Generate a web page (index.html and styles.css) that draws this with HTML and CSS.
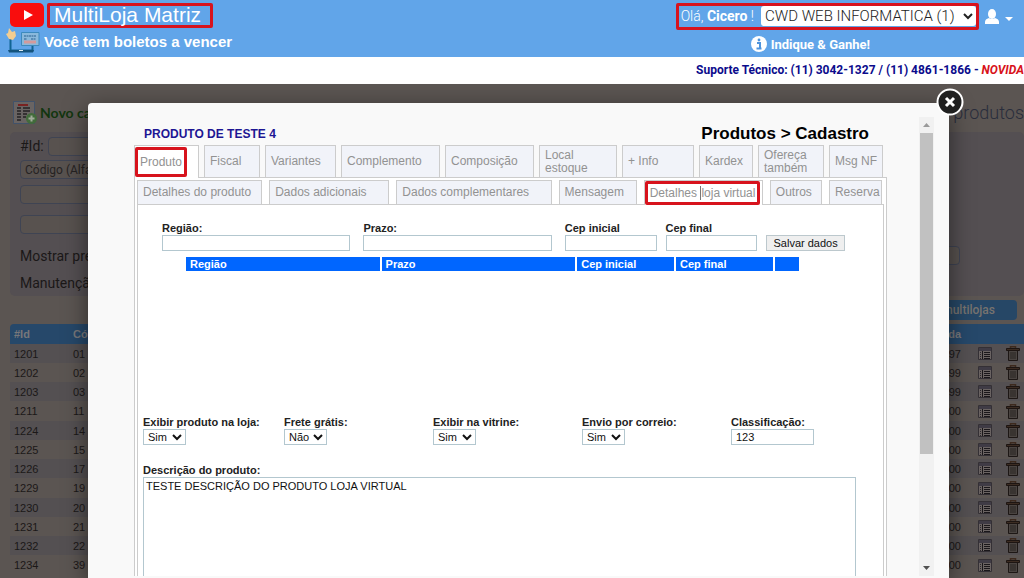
FILE: index.html
```
<!DOCTYPE html>
<html lang="pt-BR">
<head>
<meta charset="utf-8">
<title>MultiLoja Matriz</title>
<link rel="stylesheet" href="styles.css">
</head>
<body>
<svg class="defs" aria-hidden="true">
  <symbol id="list" viewBox="0 0 14 15"><path fill="#6a6362" stroke="#343035" d="M.5 1.500h13v12H.5z"/><path fill="#3f3b45" d="M1 2h12v3H1z"/><path fill="none" stroke="#1a171a" d="M4.500 5v8M6 6.500h6M6 8.500h6M6 10.500h6M6 12.500h6"/><path fill="none" stroke="#2c282c" stroke-dasharray="1 1" d="M2.500 6v7"/></symbol>
  <symbol id="trash" viewBox="0 0 14 15"><path fill="#4a4441" stroke="#1d1715" d="M2.500 4h9v10.500h-9z"/><path fill="#3c2c22" stroke="#1d1512" d="M.5 2.500h13v2H.5z"/><path stroke="#3d2a1e" stroke-width="1.500" fill="none" d="M4.500 2V.8h5V2"/><path stroke="#292422" d="M5 6v7M7 6v7M9 6v7"/></symbol>
</svg>
<header class="topbar">
  <div class="brand">
    <div class="brand-row">
      <svg class="youtube" viewBox="0 0 34 24"><rect width="34" height="24" rx="5" fill="#f90d0d"/><path d="M14 7l9 5-9 5z" fill="#fff"/></svg>
      <h1 class="brand-name marked">MultiLoja Matriz</h1>
    </div>
    <a class="alert" href="#">
      <svg class="bill" viewBox="0 0 34 26"><path d="M4.500 9v13.500h22V18" fill="none" stroke="#116493" stroke-width="2"/><path d="M2 22h26l-1 2.500H3z" fill="#13537d"/><path d="M13 22h4v1h-4z" fill="#dcebf2"/><path d="M15.500 4.500H33v13H15.500z" fill="#8ab9dc" stroke="#3d8abd"/><path d="M18 8h12M18 11h3M25 11h5" stroke="#4a7da8" stroke-width="1.500" stroke-dasharray="2 .5"/><path d="M18 14h12" stroke="#d39a9c" stroke-width="3"/><path d="M3 0l3 4 3-1 1 5-3 4-4-1-3-5 2-1z" fill="#f3cd91"/></svg>
      Você tem boletos a vencer
    </a>
  </div>
  <div class="account">
    <div class="account-row">
      <div class="user marked">
        <label for="store">Olá, <b>Cicero</b> !</label>
        <select id="store" class="store"><option>CWD WEB INFORMATICA (1)</option></select>
      </div>
      <button class="profile" aria-label="Perfil"><svg viewBox="0 0 28 16"><ellipse cx="7" cy="5" rx="4" ry="5" fill="#fff"/><path d="M0 15v-2q0-3 4-4 3 2 6 0 4 1 4 4v2z" fill="#fff"/><path d="M20 8h8l-4 4z" fill="#fff"/></svg></button>
    </div>
    <a class="refer" href="#"><svg viewBox="0 0 16 16"><circle cx="8" cy="8" r="8" fill="#fff"/><path d="M6 7h3v5M5.500 12.500h5" fill="none" stroke="#4e94dd" stroke-width="2"/><circle cx="8" cy="4" r="1.400" fill="#4e94dd"/></svg>Indique &amp; Ganhe!</a>
  </div>
</header>
<p class="support">Suporte Técnico: (11) 3042-1327 / (11) 4861-1866 - <em>NOVIDA</em></p>

<main class="page">
  <div class="page-head">
    <a class="new" href="#"><svg viewBox="0 0 25 24"><path d="M.5.5h21v22H.5z" fill="#696463" stroke="#41526a"/><path d="M5 4h10" stroke="#782222" stroke-width="2"/><path d="M4 7h4M4 10h4M4 13h4M4 16h4M4 19h4M10 7h7M10 10h7M10 13h4M10 16h3" stroke="#252225" stroke-width="1.500"/><circle cx="18.500" cy="17.500" r="5.500" fill="#426b3b"/><path d="M18.500 14.500v6M15.500 17.500h6" stroke="#a1ab9b" stroke-width="2"/></svg>Novo ca</a>
    <h2 class="page-title">e produtos</h2>
  </div>
  <section class="filters">
    <div class="filter-id"><label for="fid">#Id:</label><input id="fid"></div>
    <select class="wide" aria-label="Campo"><option>Código (Alfa</option></select>
    <input class="wide" aria-label="Busca">
    <input class="wide second" aria-label="Filtro">
    <div class="filter-line"><label for="price">Mostrar pre</label><input id="price"></div>
    <div class="filter-line">Manutençã</div>
  </section>
  <div class="actions"><button class="stores">multilojas</button></div>
  <table class="products">
    <thead><tr><th class="c-id">#Id</th><th>Có</th><th class="c-val">da</th><th class="c-list"></th><th class="c-del"></th></tr></thead>
    <tbody id="rows"></tbody>
  </table>
</main>

<div class="modal" role="dialog" aria-label="Produtos - Cadastro">
  <button class="close" aria-label="Fechar"><svg viewBox="0 0 28 28"><circle cx="14" cy="14" r="12.500" fill="#202020" stroke="#fff" stroke-width="2"/><path d="M10 10l8 8M18 10l-8 8" stroke="#fff" stroke-width="3"/></svg></button>
  <div class="frame">
    <div class="content">
      <div class="heading"><h3>PRODUTO DE TESTE 4</h3><h2>Produtos &gt; Cadastro</h2></div>
      <nav class="tabs">
        <button class="tab t65 active"><span class="marked tight">Produto</span></button>
        <button class="tab t56">Fiscal</button>
        <button class="tab t71">Variantes</button>
        <button class="tab t99">Complemento</button>
        <button class="tab t89">Composição</button>
        <button class="tab t78">Local<br>estoque</button>
        <button class="tab t72">+ Info</button>
        <button class="tab t54">Kardex</button>
        <button class="tab t66">Ofereça<br>também</button>
        <button class="tab t54">Msg NF</button>
      </nav>
      <div class="outer">
        <nav class="tabs sub">
          <button class="tab t125">Detalhes do produto</button>
          <button class="tab t120">Dados adicionais</button>
          <button class="tab t155">Dados complementares</button>
          <button class="tab t78">Mensagem</button>
          <button class="tab t119 active"><span class="marked tight">Detalhes <i class="caret"></i>loja virtual</span></button>
          <button class="tab t52">Outros</button>
          <button class="tab t53">Reserva</button>
        </nav>
        <div class="inner">
          <form class="region">
            <div class="field f-wide"><label for="reg">Região:</label><input id="reg"></div>
            <div class="field f-wide"><label for="pra">Prazo:</label><input id="pra"></div>
            <div class="field f-cep"><label for="ci">Cep inicial</label><input id="ci"></div>
            <div class="field f-cep"><label for="cf">Cep final</label><input id="cf"></div>
            <button type="button" class="save">Salvar dados</button>
          </form>
          <table class="regions"><thead><tr><th class="r-wide">Região</th><th class="r-wide">Prazo</th><th class="r-cep">Cep inicial</th><th class="r-cep">Cep final</th><th class="r-act"></th></tr></thead></table>
          <div class="options">
            <div class="field"><label for="o1">Exibir produto na loja:</label><select id="o1"><option>Sim</option></select></div>
            <div class="field"><label for="o2">Frete grátis:</label><select id="o2"><option>Não</option></select></div>
            <div class="field"><label for="o3">Exibir na vitrine:</label><select id="o3"><option>Sim</option></select></div>
            <div class="field"><label for="o4">Envio por correio:</label><select id="o4"><option>Sim</option></select></div>
            <div class="field"><label for="o5">Classificação:</label><input id="o5" value="123"></div>
          </div>
          <div class="field description"><label for="desc">Descrição do produto:</label><textarea id="desc">TESTE DESCRIÇÃO DO PRODUTO LOJA VIRTUAL</textarea></div>
        </div>
      </div>
    </div>
    <div class="scrollbar"><svg viewBox="0 0 15 16"><path d="M4 10h7L7.500 6z" fill="#9a9a9a"/></svg><div class="thumb"></div><svg class="down" viewBox="0 0 15 16"><path d="M4 6h7l-3.500 4z" fill="#505050"/></svg></div>
  </div>
</div>
<script src="rows.js"></script>
</body>
</html>
```
FILE: rows.js
```
const products = [
  [1201, '01', '97'], [1202, '02', '99'], [1203, '03', '99'], [1211, '11', '00'],
  [1224, '14', '00'], [1225, '15', '00'], [1226, '17', '00'], [1229, '19', '00'],
  [1230, '20', '00'], [1231, '21', '00'], [1232, '22', '00'], [1234, '39', '00']
];
document.getElementById('rows').innerHTML = products.map(([id, code, cents]) =>
  `<tr><td class="c-id">${id}</td><td>${code}</td><td class="c-val">${cents}</td>` +
  '<td class="c-list"><svg><use href="#list"/></svg></td>' +
  '<td class="c-del"><svg><use href="#trash"/></svg></td></tr>'
).join('');
```
FILE: styles.css
```
* { box-sizing: border-box; }
body {
  margin: 0;
  height: 100vh;
  overflow: hidden;
  display: flex;
  flex-direction: column;
  background: #5b5552;
  font-family: "Liberation Sans", Arial, sans-serif;
  font-size: 11px;
}
h1, h2, h3, p { margin: 0; }
button, input, select, textarea { font: inherit; margin: 0; border-radius: 0; }
button { padding: 0; border: 0; }
a { text-decoration: none; }
svg { display: block; flex: none; }
.defs { position: absolute; width: 0; height: 0; }
.marked { border: 3px solid #d7131d; border-radius: 2px; }

/* Top bar */
.topbar {
  flex: none;
  display: flex;
  justify-content: space-between;
  height: 57px;
  padding: 3px 11px 0 6px;
  background: #61a5e9;
  color: #fff;
}
.brand-row { display: flex; gap: 3px; padding-left: 4px; }
.youtube { width: 34px; height: 24px; }
.brand-name {
  height: 25px;
  padding: 0 9px 0 4px;
  font-size: 21px;
  font-weight: 400;
  line-height: 18px;
}
.alert {
  display: flex;
  align-items: center;
  gap: 4px;
  height: 26px;
  color: #fff;
  font-size: 15px;
  font-weight: 700;
}
.bill { width: 34px; height: 26px; }
.account { font-family: Roboto, sans-serif; }
.account-row { display: flex; gap: 6px; align-items: center; }
.user {
  display: flex;
  gap: 7px;
  height: 27px;
  align-items: flex-start;
  font-size: 14px;
  font-weight: 300;
  line-height: 20px;
  padding-left: 2px;
}
.user b { font-weight: 700; }
.store {
  width: 215px;
  height: 20px;
  padding: 0;
  border: 0;
  border-radius: 3px;
  background: #fff;
  color: #222;
  font-size: 15px;
}
.profile { background: none; }
.profile svg { width: 28px; height: 16px; }
.refer {
  display: flex;
  gap: 4px;
  align-items: center;
  padding: 6px 0 0 75px;
  color: #fff;
  font-size: 13px;
  font-weight: 700;
}
.refer svg { width: 16px; height: 16px; }
.support {
  flex: none;
  height: 27px;
  background: #fff;
  color: #0b0b8c;
  font: 700 12px/26px Roboto, sans-serif;
  text-align: right;
}
.support em { color: #d8121a; }

/* Dimmed page */
.page { padding-left: 10px; color: #1b1818; }
.page-head {
  display: flex;
  justify-content: space-between;
  align-items: center;
  height: 48px;
  padding: 9px 0 0 3px;
}
.new {
  display: flex;
  align-items: center;
  gap: 2px;
  color: #12360f;
  font: 700 14px Lato, sans-serif;
}
.new svg { width: 25px; height: 24px; }
.page-title { color: #292d3c; font: 300 18px Roboto, sans-serif; }
.filters {
  height: 164px;
  padding: 4px 0 0 10px;
  border-radius: 5px;
  background: #544f52;
  font-family: Roboto, sans-serif;
  font-size: 14px;
}
.filters input, .filters select {
  height: 19px;
  padding: 0 5px;
  border: 1px solid #3f4453;
  border-radius: 4px;
  background: #58524f;
  color: #262323;
}
.filters select { padding: 0; font-size: 12px; }
.filter-id { display: flex; gap: 4px; align-items: center; height: 20px; margin-bottom: 4px; }
.wide { display: block; width: 75%; margin-bottom: 6px; }
.second { margin: 11px 0 8px; }
.filter-line {
  display: flex;
  justify-content: space-between;
  align-items: center;
  height: 27px;
  padding-right: 64px;
}
.actions { display: flex; justify-content: flex-end; padding: 4px 7px 4px 0; }
.stores {
  width: 160px;
  height: 20px;
  padding-right: 22px;
  border-radius: 4px;
  background: #264766;
  color: #77736f;
  font: 500 12px/20px Roboto, sans-serif;
  text-align: right;
}
.products { width: 100%; border-collapse: collapse; table-layout: fixed; }
.products tr { height: 19px; }
.products tbody tr:nth-child(4n) { height: 20px; }
.products th { height: 20px; background: #26486a; color: #77777a; text-align: left; }
.products th:first-child { border-radius: 4px 0 0 0; }
.products td, .products th { padding: 0 4px; }
.products tbody tr:nth-child(odd) { background: #545052; }
.products .c-id { width: 59px; }
.products .c-val { width: 80px; padding: 0; text-align: right; }
.products .c-list { width: 38px; padding: 0 0 0 17px; }
.products .c-del { width: 25px; padding: 0 0 0 7px; }
.products svg { width: 14px; height: 15px; }

/* Dialog */
.modal {
  position: absolute;
  top: 103px;
  right: 75px;
  bottom: 0;
  left: 88px;
  padding: 14px 15px 2px 46px;
  border-radius: 4px 4px 0 0;
  background: #f9f9f9;
  box-shadow: 0 6px 25px rgba(0, 0, 0, .5);
}
.close { position: absolute; top: -15px; right: -15px; background: none; }
.close svg { width: 28px; height: 28px; }
.frame { display: flex; gap: 32px; height: 100%; overflow: hidden; }
.content { flex: 1; display: flex; flex-direction: column; }
.heading {
  flex: none;
  display: flex;
  justify-content: space-between;
  align-items: center;
  height: 28px;
  padding: 6px 18px 0 10px;
}
.heading h3 { color: #1d1693; font-size: 12px; }
.heading h2 { color: #000; font-size: 17px; }
.tabs { flex: none; display: flex; gap: 5px; height: 32px; padding-right: 4px; }
.tab {
  padding: 0 0 0 5px;
  border: 1px solid #ccc;
  border-bottom: 0;
  background: #f1f3f9;
  color: #929292;
  font-size: 12px;
  line-height: 13px;
  text-align: left;
  white-space: nowrap;
  min-width: 0;
}
.tab.active { position: relative; height: calc(100% + 1px); padding-left: 0; background: #fff; }
.sub { gap: 7px; height: 24px; padding-right: 2px; }
.t52 { flex: 52 1 52px; }
.t53 { flex: 53 1 53px; }
.t54 { flex: 54 1 54px; }
.t56 { flex: 56 1 56px; }
.t65 { flex: 65 1 65px; }
.t66 { flex: 66 1 66px; }
.t71 { flex: 71 1 71px; }
.t72 { flex: 72 1 72px; }
.t78 { flex: 78 1 78px; }
.t89 { flex: 89 1 89px; }
.t99 { flex: 99 1 99px; }
.t119 { flex: 119 1 119px; }
.t120 { flex: 120 1 120px; }
.t125 { flex: 125 1 125px; }
.t155 { flex: 155 1 155px; }
.tight { display: inline-block; padding: 3px 2px; line-height: 18px; }
.sub .tight { padding: 0 2px; }
.caret { border-left: 1px solid #777; }
.outer {
  flex: 1;
  display: flex;
  flex-direction: column;
  padding: 2px 2px 0;
  border: 1px solid #ccc;
  border-bottom: 0;
  background: #fff;
}
.inner {
  flex: 1;
  display: flex;
  flex-direction: column;
  padding: 16px 27px 0 5px;
  border: 1px solid #ccc;
  border-bottom: 0;
}
.region { display: flex; gap: 9px; align-items: flex-end; padding: 0 11px 0 19px; }
.field { display: flex; flex-direction: column; align-items: flex-start; }
.field label { color: #222; font-size: 11px; font-weight: 700; line-height: 14px; }
.field input, .field select {
  height: 16px;
  padding: 0 4px;
  border: 1px solid #b3c7cf;
  background: #fff;
  color: #111;
}
.field select { width: 43px; padding: 0; }
.region input { width: 100%; }
.f-wide { flex: 189 1 0; margin-right: 4px; }
.f-cep { flex: 92 1 0; }
.save {
  flex: 77 1 0;
  height: 16px;
  border: 1px solid #bcc8cd;
  background: #efefef;
  color: #111;
  white-space: nowrap;
}
.regions {
  align-self: flex-start;
  width: calc(100% - 96px);
  margin: 4px 0 0 41px;
  border-spacing: 2px;
  table-layout: fixed;
}
.regions th {
  height: 14px;
  padding: 0 4px;
  background: #06f;
  color: #fff;
  font-size: 11px;
  line-height: 14px;
  text-align: left;
}
.r-wide { width: 32%; }
.r-cep { width: 16%; }
.options {
  display: grid;
  grid-template-columns: 141fr 149fr 149fr 149fr 125fr;
  margin-top: 142px;
}
.options input { width: 83px; }
.description { flex: 1; margin-top: 18px; }
.description textarea {
  flex: 1;
  width: 100%;
  padding: 2px;
  border: 1px solid #b3c7cf;
  border-bottom: 0;
  color: #111;
  resize: none;
}
.scrollbar { display: flex; flex-direction: column; align-items: center; width: 15px; background: #f1f1f1; }
.scrollbar svg { width: 15px; height: 16px; }
.scrollbar .down { margin-top: auto; }
.thumb { width: 13px; height: 70%; background: #c1c1c1; }
```
